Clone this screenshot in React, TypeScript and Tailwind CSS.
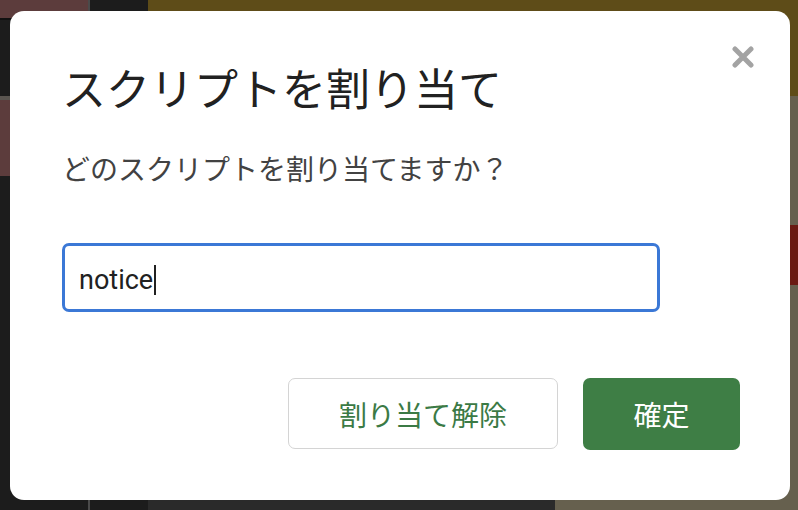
import React from 'react';

const jp = { fontFamily: '"Noto Sans CJK JP", "Noto Sans", sans-serif' };

const Backdrop = () => (
  <div className="absolute inset-0 flex">
    <div className="flex w-[88px] flex-col">
      <div className="h-[18px] bg-[#5c3c3c]" />
      <div className="h-[2px] bg-[#111]" />
      <div className="h-[76px] bg-[#1c1c1c]" />
      <div className="h-[4px] bg-[#5a5550]" />
      <div className="h-[76px] bg-[#5c3c3c]" />
      <div className="flex-1 bg-[#1c1c1c]" />
    </div>
    <div className="w-[2px] bg-[#4a4a4a]" />
    <div className="w-[58px] bg-[#1c1c1c]" />
    <div className="flex w-[407px] flex-col">
      <div className="h-[20px] bg-[#5e4c18]" />
      <div className="flex-1 bg-[#2a2a2a]" />
    </div>
    <div className="flex flex-1 flex-col">
      <div className="h-[96px] bg-[#5e4c18]" />
      <div className="flex flex-1 flex-col bg-[#66604e]">
        <div className="h-[129px]" />
        <div className="h-[60px] bg-[#6a1a12]" />
      </div>
    </div>
  </div>
);

export default function App() {
  return (
    <div className="relative h-[510px] w-[798px] overflow-hidden bg-[#1c1c1c]" style={jp}>
      <Backdrop />
      <div className="absolute left-[10px] top-[11px] flex h-[489px] w-[780px] flex-col rounded-[14px] bg-white px-[52px]">
        <button className="absolute right-[36px] top-[35px] flex h-[22px] w-[22px] items-center justify-center">
          <svg viewBox="0 0 22 22" className="h-[22px] w-[22px]">
            <path d="M3 3 L19 19 M19 3 L3 19" stroke="#a3a3a3" strokeWidth="5" strokeLinecap="round" />
          </svg>
        </button>
        <h1 className="mt-[46px] text-[44px] leading-[60px] text-[#212121]">スクリプトを割り当て</h1>
        <p className="mt-[33px] text-[28px] leading-[36px] text-[#424242]">どのスクリプトを割り当てますか？</p>
        <div className="mt-[57px] flex h-[69px] w-[598px] items-center rounded-[7px] border-[3px] border-[#3b78d6] px-[14px] pt-[4px]">
          <span className="text-[27px] leading-[34px] text-[#212121]" style={{ fontFamily: 'Roboto, "Noto Sans", sans-serif' }}>notice</span>
          <span className="ml-[1px] h-[30px] w-[2px] bg-[#212121]" />
        </div>
        <div className="mr-[-2px] mt-[66px] flex justify-end gap-[25px]">
          <button className="flex h-[71px] w-[270px] items-center justify-center rounded-[7px] border border-[#d4d4d4] bg-white text-[28px] text-[#3b7a45]">
            割り当て解除
          </button>
          <button className="flex h-[72px] w-[157px] items-center justify-center rounded-[7px] bg-[#3e7e45] text-[28px] text-white">
            確定
          </button>
        </div>
      </div>
    </div>
  );
}
